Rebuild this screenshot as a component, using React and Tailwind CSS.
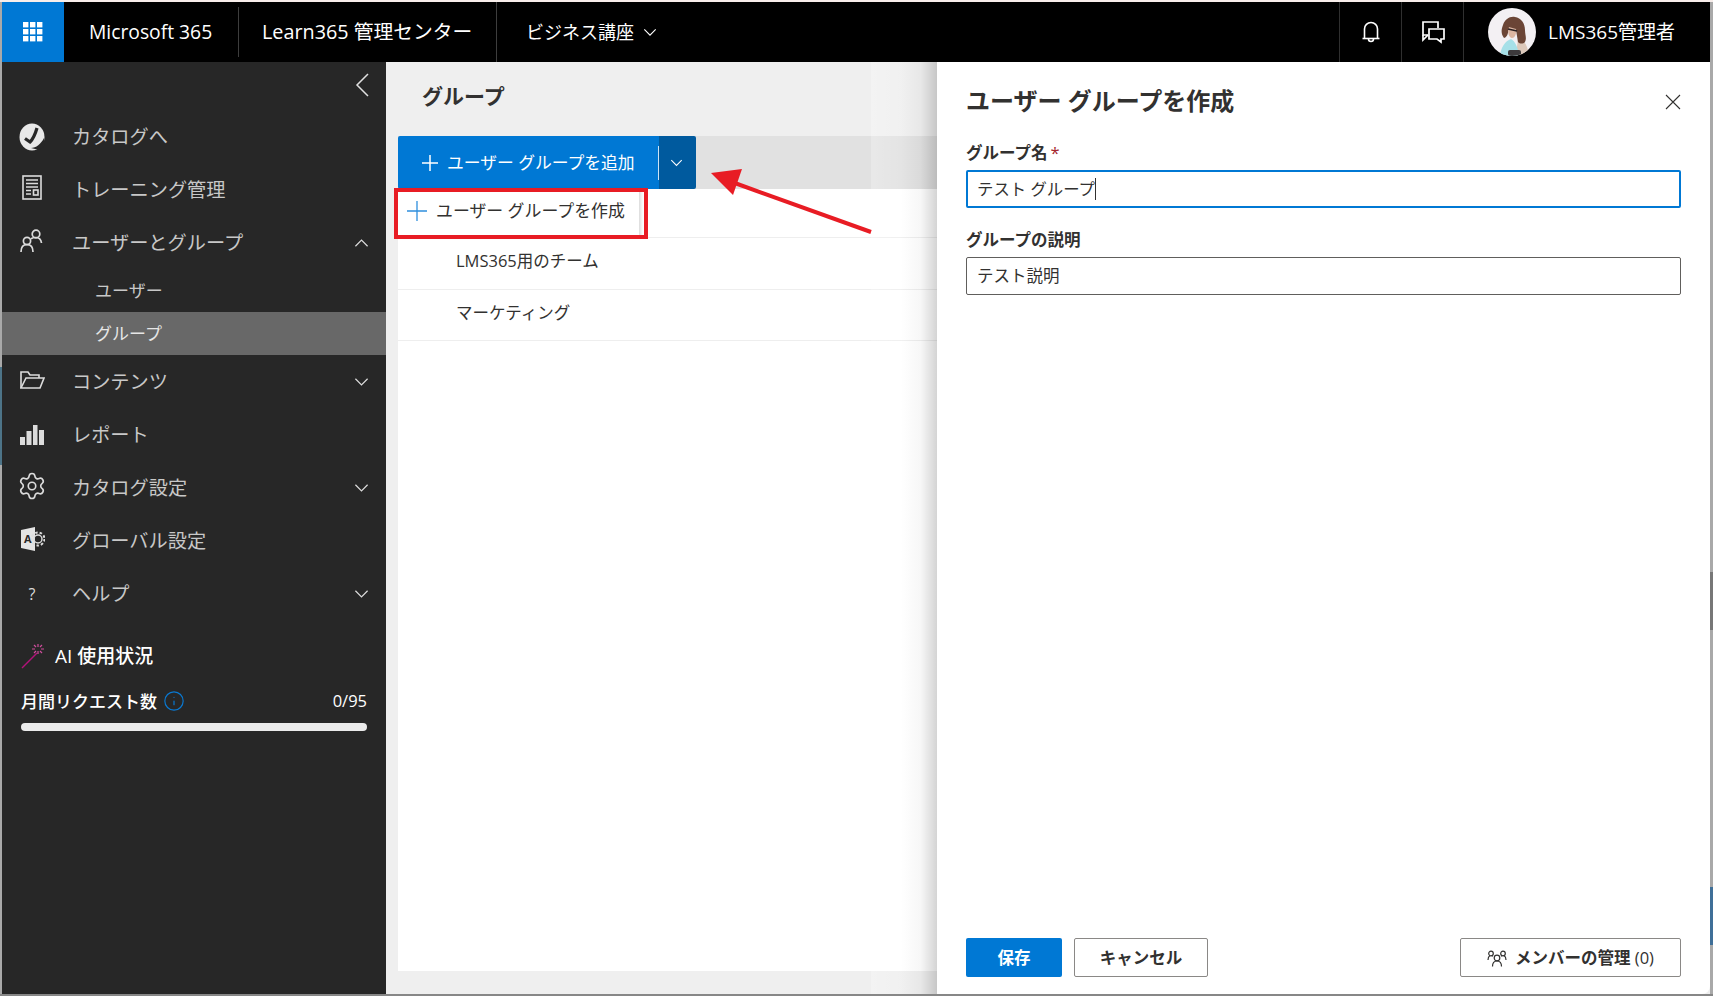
import { Info, Settings } from 'lucide-react';

function Chevron({ up = false, className = '' }) {
  return (
    <svg viewBox="0 0 16 10" className={className} fill="none" stroke="currentColor" strokeWidth="1.3">
      <path d={up ? 'M1.5 8.5 8 2l6.5 6.5' : 'M1.5 1.5 8 8l6.5-6.5'} />
    </svg>
  );
}

function Waffle() {
  const cells = [3, 10, 17];
  return (
    <svg viewBox="0 0 22 22" className="h-[22px] w-[22px]" fill="white">
      {cells.map((y) => cells.map((x) => <rect key={`${x}-${y}`} x={x - 2} y={y - 2} width="5.4" height="5.4" />))}
    </svg>
  );
}

function Bell() {
  return (
    <svg viewBox="0 0 20 24" className="h-[24px] w-[20px]" fill="none" stroke="white" strokeWidth="1.6">
      <path d="M3.5 18V9a6.5 6.5 0 0 1 13 0v9" />
      <path d="M1.5 18.5h17" />
      <path d="M7.5 19a2.5 2.5 0 0 0 5 0" />
    </svg>
  );
}

function Chat() {
  return (
    <svg viewBox="0 0 26 24" className="h-[24px] w-[26px]" fill="none" stroke="white" strokeWidth="1.7">
      <path d="M8 15H3V2h15v6" />
      <path d="M3 15v5l5-5" />
      <path d="M9 9h15v10h-3v3l-4-3H9z" />
    </svg>
  );
}

function Avatar() {
  return (
    <svg viewBox="0 0 48 48" className="h-[48px] w-[48px] rounded-full">
      <rect width="48" height="48" fill="#f3f0f3" />
      <path d="M30 30c7 2 10 9 11 18H28z" fill="#dcc8ba" />
      <path d="M12 48c1-9 5-15 11-17 4 2 7 8 8 17z" fill="#a6e0e8" />
      <path d="M16 30c-3-4-3-8-1-13 2-6 7-9 12-8 6 1 10 6 10 13 0 5 2 8 0 12-2 2-5 2-7 0l-2-12-7-2c-1 4-1 9-5 10z" fill="#6b4536" />
      <path d="M21 19l7 2c1 4-1 9-4 9s-5-6-3-11z" fill="#dcb6a2" />
      <path d="M20 21l9 2" stroke="#2a2022" strokeWidth="1.6" />
      <rect x="20" y="42" width="13" height="6" rx="2" fill="#3c3a3c" />
    </svg>
  );
}

function CatalogIcon() {
  return (
    <svg viewBox="0 0 26 28" className="h-[28px] w-[26px]">
      <ellipse cx="13" cy="14" rx="12.5" ry="13.5" fill="#e8e8e8" />
      <path d="M6 15.500l5 3.500c3-3 5-7 7-14" fill="none" stroke="#272727" strokeWidth="3.200" />
      <path d="M12 25c5 0 10-4 13-10l1 8-6 4z" fill="#272727" />
    </svg>
  );
}

function TrainingIcon() {
  return (
    <svg viewBox="0 0 20 25" className="h-[25px] w-[20px]" fill="none" stroke="#dcdcdc" strokeWidth="1.6">
      <rect x="1" y="1" width="18" height="23" />
      <path d="M4 5h12M4 8.5h12M4 12h12M4 15.5h5M4 19h5" />
      <rect x="11.5" y="15" width="4.5" height="5" />
    </svg>
  );
}

function UsersIcon() {
  return (
    <svg viewBox="0 0 24 26" className="h-[26px] w-[24px]" fill="none" stroke="#dcdcdc" strokeWidth="1.7">
      <circle cx="16" cy="6" r="3.8" />
      <circle cx="7" cy="13" r="3.6" />
      <path d="M11 11c1-1.500 2.500-1.500 5-1.500 3 0 5 2 5.500 5.500" />
      <path d="M1 24c0-4.500 2-7.500 6-7.500s6 3 6 7.500" />
    </svg>
  );
}

function MembersIcon() {
  return (
    <svg viewBox="0 0 20 18" className="h-[18px] w-[20px]" fill="none" stroke="#323130" strokeWidth="1.200">
      <circle cx="4" cy="3.500" r="2.300" />
      <circle cx="16" cy="3.500" r="2.300" />
      <circle cx="10" cy="8" r="2.800" />
      <path d="M1 10c0-2 .5-3.500 2-4.500M19 10c0-2-.5-3.500-2-4.500M6 6h-1M14 6h1" />
      <path d="M5.500 16.500c0-3 1.500-5.500 4.500-5.500s4.500 2.500 4.500 5.500" />
    </svg>
  );
}

function FolderIcon() {
  return (
    <svg viewBox="0 0 25 18" className="h-[18px] w-[25px]" fill="none" stroke="#dcdcdc" strokeWidth="1.6">
      <path d="M1 17V1h7l2 3h9v3" />
      <path d="M1 17 6 7h18l-4 10z" />
    </svg>
  );
}

function BarsIcon() {
  return (
    <svg viewBox="0 0 24 20" className="h-[20px] w-[24px]" fill="#dcdcdc">
      <rect x="0" y="12" width="5" height="8" />
      <rect x="6.500" y="6" width="5" height="14" />
      <rect x="13" y="0" width="4.500" height="20" />
      <rect x="19" y="5" width="5" height="15" />
    </svg>
  );
}

function GlobalIcon() {
  return (
    <svg viewBox="0 0 25 24" className="h-[24px] w-[25px]">
      <path d="M1 3l14-3v24L1 21z" fill="#e4e4e4" />
      <text x="4" y="16" fontSize="11" fontWeight="700" fill="#272727">A</text>
      <circle cx="18" cy="12" r="4" fill="none" stroke="#dcdcdc" strokeWidth="1.500" />
      <circle cx="18" cy="12" r="6.500" fill="none" stroke="#dcdcdc" strokeWidth="2" strokeDasharray="2.500 2" />
    </svg>
  );
}

function WandIcon() {
  return (
    <svg viewBox="0 0 26 26" className="h-[26px] w-[26px]" fill="none" stroke="#b4127a" strokeWidth="1.500">
      <path d="M1 25 16 10" />
      <path d="M17 1v3M17 8v3M11 6h3M20 6h3M13 2l2 2M19 8l2 2M21 2l-2 2M13 10l2-2" strokeWidth="1.200" stroke="#cf4d9c" />
    </svg>
  );
}

function NavItem({ icon, label, chevron }) {
  return (
    <div className="flex h-[53px] items-center pr-[17px]">
      <div className="flex w-[60px] shrink-0 justify-center">{icon}</div>
      <span className="ml-[10px] flex-1 pt-[2px] text-[19.200px] text-[#c8c8c8]">{label}</span>
      {chevron && <Chevron up={chevron === 'up'} className="h-[10px] w-[15px] text-[#dcdcdc]" />}
    </div>
  );
}

export default function App() {
  return (
    <div className="relative h-[996px] w-[1713px] overflow-hidden border-t-2 border-[#f8eeeb] bg-[#a9a9a9] pl-[2px] pr-[3px] font-['Open_Sans','Noto_Sans_CJK_JP',sans-serif]">
      <header className="flex h-[60px] items-center bg-black text-white">
        <div className="flex h-full w-[62px] items-center justify-center bg-[#0078d4]">
          <Waffle />
        </div>
        <div className="flex h-full w-[174px] items-center pl-[25px] text-[19.300px]">Microsoft 365</div>
        <div className="my-auto h-[50px] w-px bg-[#3d3d3d]" />
        <div className="flex h-full w-[257px] items-center pl-[23px] text-[19.800px]">Learn365 管理センター</div>
        <div className="h-full w-px bg-[#3d3d3d]" />
        <div className="flex h-full flex-1 items-center gap-[9px] pl-[29px] text-[18px]">
          ビジネス講座
          <Chevron className="h-[9px] w-[14px]" />
        </div>
        <div className="flex h-full w-[62px] items-center justify-center border-l border-[#2f2f2f]">
          <Bell />
        </div>
        <div className="flex h-full w-[62px] items-center justify-center border-l border-[#2f2f2f]">
          <Chat />
        </div>
        <div className="flex h-full w-[247px] items-center border-l border-[#2f2f2f] pl-[24px]">
          <Avatar />
          <span className="ml-[12px] text-[19px]">LMS365管理者</span>
        </div>
      </header>

      <div className="flex h-[932px]">
        <aside className="w-[384px] shrink-0 bg-[#272727]">
          <div className="flex h-[48px] items-center justify-end pr-[17px]">
            <svg viewBox="0 0 14 24" className="mb-[3px] h-[24px] w-[14px]" fill="none" stroke="#e0e0e0" strokeWidth="1.500">
              <path d="M13 1 2 12l11 11" />
            </svg>
          </div>
          <NavItem icon={<CatalogIcon />} label="カタログへ" />
          <NavItem icon={<div className="-mt-[4px]"><TrainingIcon /></div>} label="トレーニング管理" />
          <NavItem icon={<div className="-mt-[4px]"><UsersIcon /></div>} label="ユーザーとグループ" chevron="up" />
          <div className="flex h-[43px] items-center pl-[93px] text-[17px] text-[#c8c8c8]">ユーザー</div>
          <div className="flex h-[43px] items-center bg-[#686868] pl-[93px] text-[17px] text-[#e6e6e6]">グループ</div>
          <NavItem icon={<div className="-mt-[4px]"><FolderIcon /></div>} label="コンテンツ" chevron="down" />
          <NavItem icon={<BarsIcon />} label="レポート" />
          <NavItem icon={<Settings className="-mt-[4px] h-[30px] w-[30px] text-[#dcdcdc]" strokeWidth={1.300} />} label="カタログ設定" chevron="down" />
          <NavItem icon={<div className="-mt-[4px]"><GlobalIcon /></div>} label="グローバル設定" />
          <NavItem icon={<span className="text-[16px] text-[#dcdcdc]">?</span>} label="ヘルプ" chevron="down" />

          <div className="mt-[22px] flex items-center pl-[19px] text-[19px] font-medium text-white">
            <WandIcon />
            <span className="ml-[8px]">AI 使用状況</span>
          </div>
          <div className="mt-[18px] flex items-center pl-[19px] pr-[19px] text-[17px] font-medium text-white">
            <span>月間リクエスト数</span>
            <Info className="ml-[6px] h-[22px] w-[22px] text-[#0a78d0]" strokeWidth={1.300} />
            <span className="ml-auto text-[16.500px] font-normal">0/95</span>
          </div>
          <div className="mx-[19px] mt-[9px] h-[8px] rounded-full bg-[#ebebeb]" />
        </aside>

        <main className="relative flex min-w-0 flex-1 flex-col bg-[#efefef] pb-[23px] pl-[12px]">
          <h1 className="flex h-[74px] items-center pb-[5px] pl-[24px] text-[21px] font-bold text-[#323130]">グループ</h1>
          <div className="flex h-[53px] shrink-0 bg-[#e1e1e1]">
            <button className="flex w-[261px] items-center gap-[9px] rounded-l-[2px] bg-[#0078d4] pl-[24px] text-[16.800px] text-white">
              <svg viewBox="0 0 16 16" className="h-[16px] w-[16px]" stroke="white" strokeWidth="1.500">
                <path d="M8 0v16M0 8h16" />
              </svg>
              ユーザー グループを追加
            </button>
            <div className="flex w-[37px] items-center justify-center rounded-r-[2px] bg-[#005a9e] text-white">
              <div className="h-[34px] w-px -translate-x-[1px] bg-white/80" />
              <Chevron className="ml-[10px] mr-auto h-[8px] w-[13px]" />
            </div>
          </div>
          <div className="flex-1 bg-white text-[16.500px] text-[#323130]">
            <div className="flex h-[49px] border-b border-[#eeeeee]">
              <div className="flex w-[241px] items-center gap-[9px] pb-[5px] pl-[9px] text-[16.900px] shadow-[2px_0_3px_rgba(0,0,0,0.15)]">
                <svg viewBox="0 0 20 20" className="h-[20px] w-[20px]" stroke="#2f8fdd" strokeWidth="1.300">
                  <path d="M10 0v20M0 10h20" />
                </svg>
                ユーザー グループを作成
              </div>
            </div>
            <div className="flex h-[52px] items-center border-b border-[#eeeeee] pb-[4px] pl-[58px]">LMS365用のチーム</div>
            <div className="flex h-[51px] items-center border-b border-[#eeeeee] pb-[4px] pl-[58px]">マーケティング</div>
          </div>

          <div className="absolute bottom-0 right-[773px] top-0 w-[66px] bg-[linear-gradient(to_right,rgba(255,255,255,0.25),rgba(255,255,255,0.1)_45%,rgba(0,0,0,0.03)_75%,rgba(0,0,0,0.17))]" />

          <section className="absolute bottom-0 right-0 top-0 flex w-[773px] flex-col rounded-br-lg bg-white pb-[17px] pl-[29px] pr-[29px] pt-[22px] text-[#323130]">
            <div className="flex h-[34px] items-center justify-between">
              <h2 className="text-[24px] font-bold">ユーザー グループを作成</h2>
              <svg viewBox="0 0 16 16" className="mt-[2px] h-[16px] w-[16px]" fill="none" stroke="#323130" strokeWidth="1.100">
                <path d="M1 1l14 14M15 1 1 15" />
              </svg>
            </div>
            <label className="mt-[23px] block h-[29px] text-[16.500px] font-bold leading-[24px]">
              グループ名<span className="ml-[3px] font-normal text-[#a4262c]">*</span>
            </label>
            <div className="flex h-[38px] items-center rounded-[2px] border-2 border-[#0078d4] pl-[9px] text-[16.400px]">
              テスト グループ
              <span className="h-[22px] w-px bg-[#323130]" />
            </div>
            <label className="mt-[20px] block h-[29px] text-[16.500px] font-bold leading-[24px]">グループの説明</label>
            <div className="flex h-[38px] items-center rounded-[2px] border border-[#605e5c] pl-[10px] text-[16.500px]">テスト説明</div>

            <div className="mt-auto flex h-[39px] text-[16.500px] font-bold">
              <button className="w-[96px] rounded-[2px] bg-[#0078d4] pt-[2px] text-white">保存</button>
              <button className="ml-[12px] w-[134px] rounded-[2px] border border-[#8a8886] pt-[2px]">キャンセル</button>
              <button className="ml-auto flex w-[221px] items-center justify-center gap-[8px] rounded-[2px] border border-[#8a8886] pt-[2px]">
                <MembersIcon />
                <span>
                  メンバーの管理 <span className="font-normal">(0)</span>
                </span>
              </button>
            </div>
          </section>
        </main>
      </div>

      {/* window edges of what's behind the screenshot */}
      <div className="absolute bottom-0 left-0 right-0 h-[2px] bg-[#878787]" />
      <div className="absolute left-0 top-[365px] h-[98px] w-[2px] bg-[#4d7488]" />
      <div className="absolute right-0 top-[570px] h-[58px] w-[3px] bg-[#777777]" />
      <div className="absolute right-0 top-[885px] h-[58px] w-[3px] bg-[#3f6f98]" />

      {/* annotations drawn on top of the screenshot */}
      <div className="pointer-events-none absolute left-[394px] top-[186px] h-[51px] w-[254px] border-4 border-[#e81c24]" />
      <svg className="pointer-events-none absolute left-[700px] top-[160px]" width="180" height="80" viewBox="0 0 180 80">
        <path d="M171 70 32 20" stroke="#e81c24" strokeWidth="4" fill="none" />
        <path d="M11 11 42 7 33 33z" fill="#e81c24" />
      </svg>
    </div>
  );
}
